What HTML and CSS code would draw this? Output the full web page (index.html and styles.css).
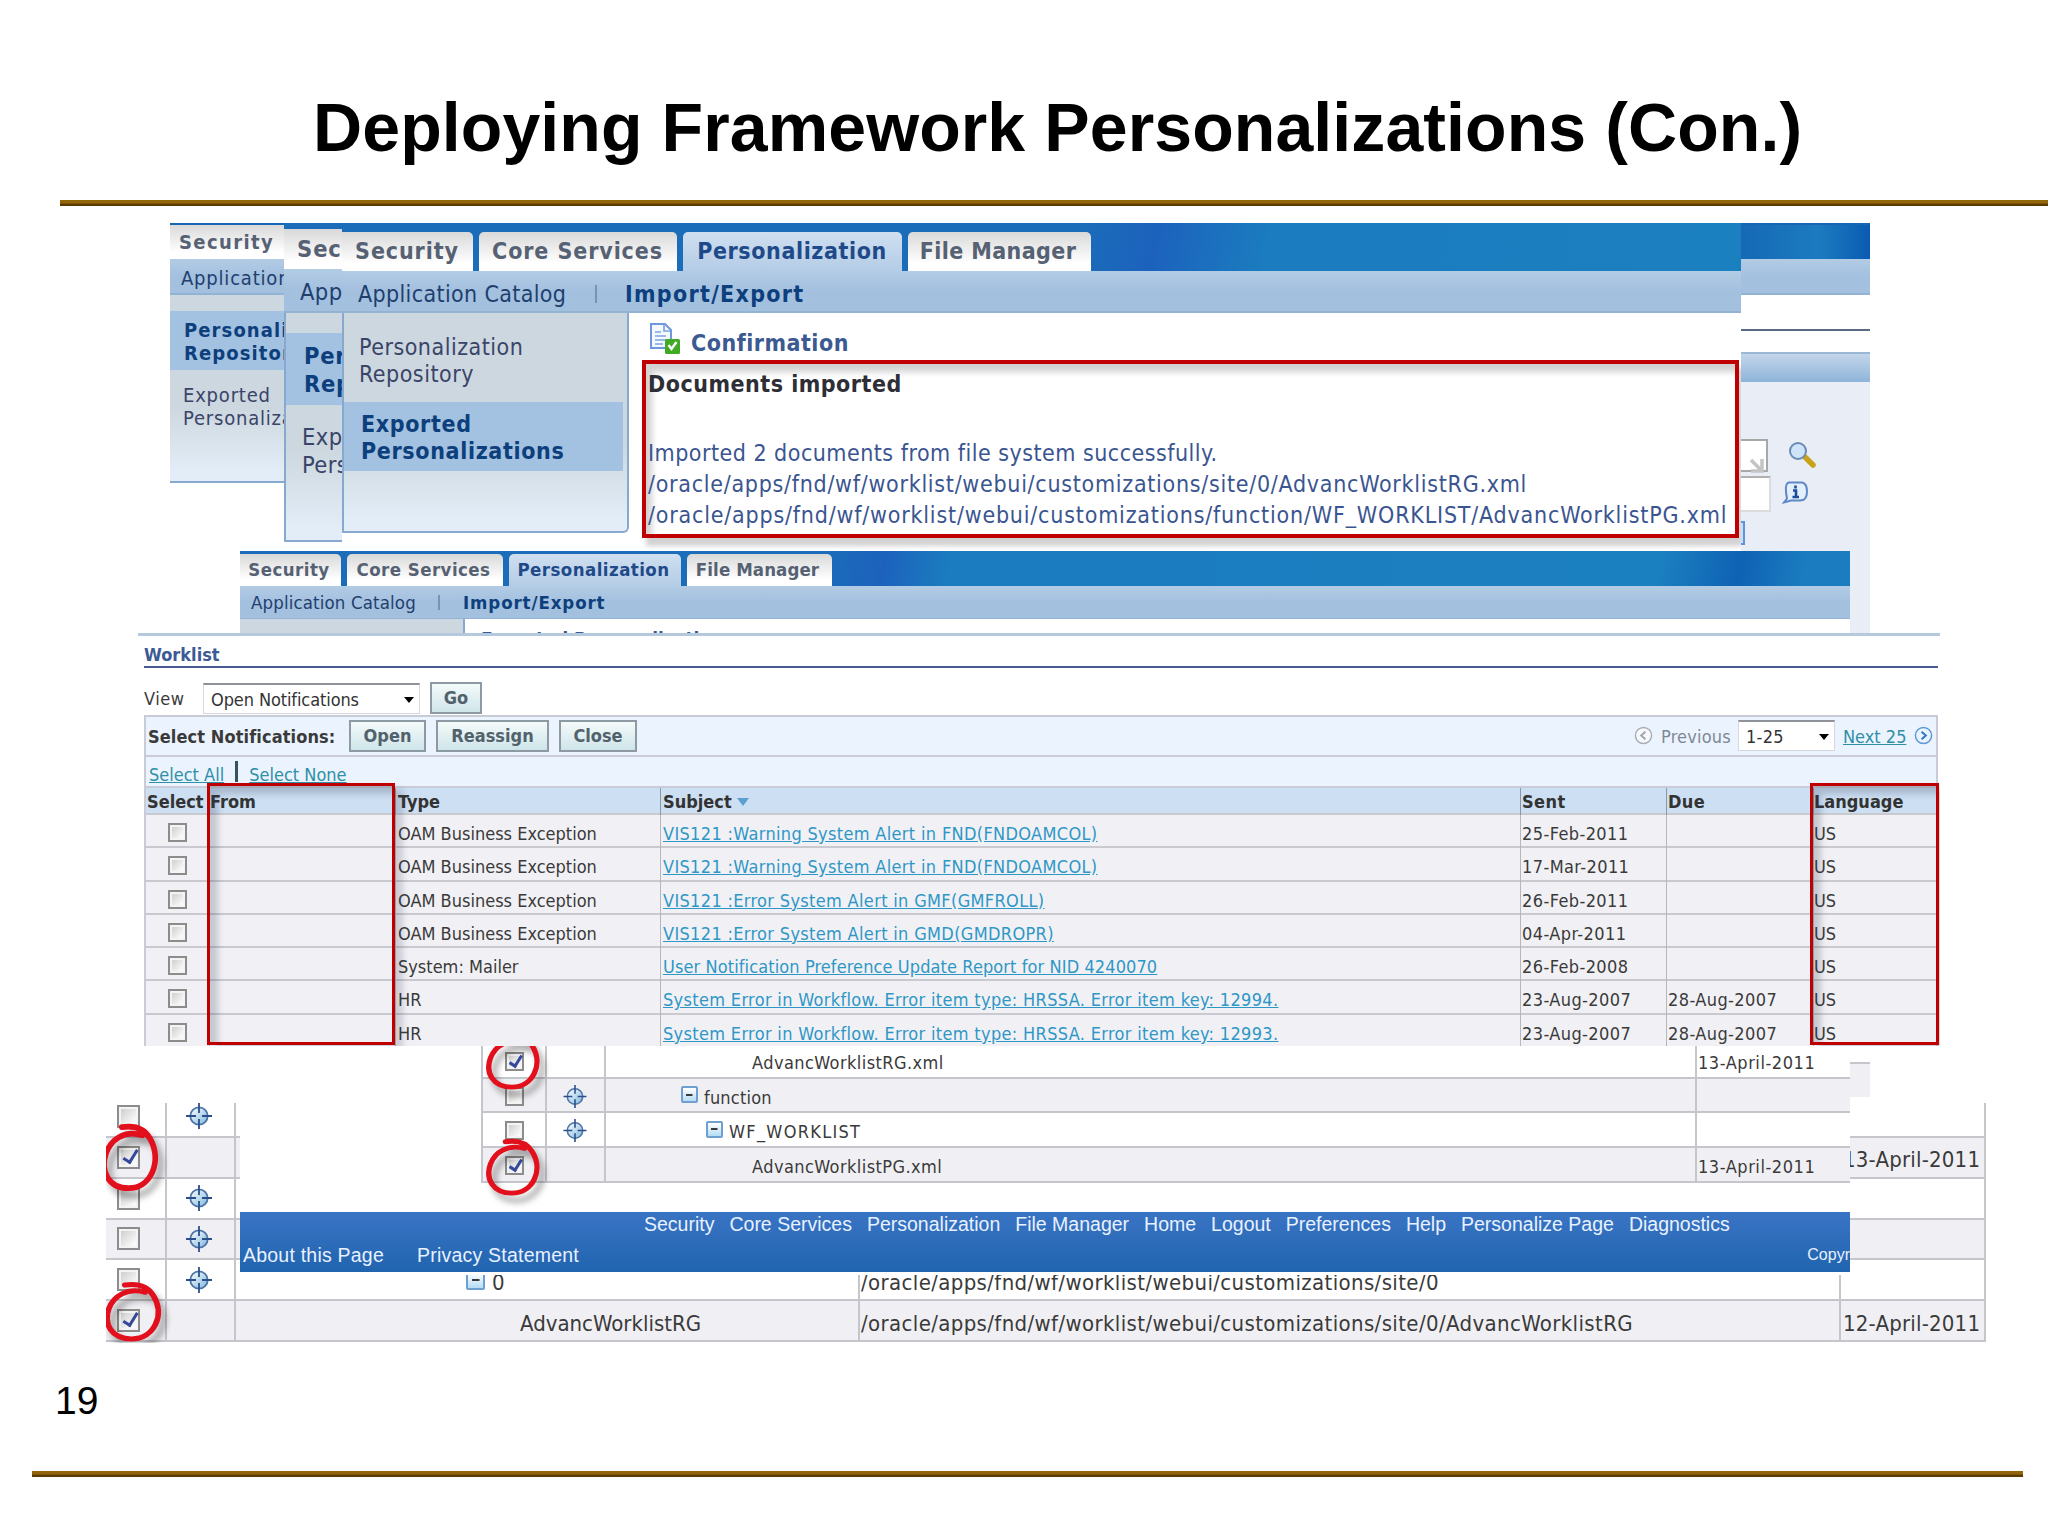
FILE: index.html
```
<!DOCTYPE html>
<html lang="en">

<head>
    <meta charset="UTF-8">
    <title>Deploying Framework Personalizations (Con.)</title>
    <link rel="stylesheet" href="styles.css">
</head>

<body>
    <svg width="0" height="0" class="defs">
        <defs>
            <linearGradient id="ballFill" x1="0" y1="0" x2="1" y2="1">
                <stop offset="0" stop-color="#ffffff" />
                <stop offset="1" stop-color="#7db8dc" />
            </linearGradient>
        </defs>
        <symbol id="target" viewBox="0 0 26 26">
            <circle cx="13" cy="13" r="8.7" fill="url(#ballFill)" stroke="#4f74a8" stroke-width="1.8" />
            <path d="M13 0v10M13 16v10M0 13h10M16 13h10" stroke="#2c4f8c" stroke-width="1.8" />
        </symbol>
        <symbol id="mark" viewBox="0 0 60 66" preserveAspectRatio="none">
            <path d="M21 8C33 6 41 9 46 18C57 37 47 61 27 61C9 61 2 46 7 31C11 19 23 10 39 15" fill="none" stroke="#e2101c" stroke-width="5" stroke-linecap="round" />
        </symbol>
    </svg>

    <div class="slide">
        <h1>Deploying Framework Personalizations (Con.)</h1>
        <div class="rule rule-top"></div>

        <!-- bottom table -->
        <div class="window big-table">
            <div class="row"><span class="c1"><i class="check"></i></span><span class="c2"><svg class="target"><use href="#target" /></svg></span><span class="c3"></span><span class="c4"></span><span class="c5"></span></div>
            <div class="row alt"><span class="c1"><i class="check on"></i></span><span class="c2"></span><span class="c3"></span><span class="c4"></span><span class="c5">13-April-2011</span></div>
            <div class="row"><span class="c1"><i class="check"></i></span><span class="c2"><svg class="target"><use href="#target" /></svg></span><span class="c3"></span><span class="c4"></span><span class="c5"></span></div>
            <div class="row alt"><span class="c1"><i class="check"></i></span><span class="c2"><svg class="target"><use href="#target" /></svg></span><span class="c3"></span><span class="c4"></span><span class="c5"></span></div>
            <div class="row"><span class="c1"><i class="check"></i></span><span class="c2"><svg class="target"><use href="#target" /></svg></span><span class="c3 level1"><i class="minus"></i>0</span><span class="c4">/oracle/apps/fnd/wf/worklist/webui/customizations/site/0</span><span class="c5"></span></div>
            <div class="row alt"><span class="c1"><i class="check on"></i></span><span class="c2"></span><span class="c3 level2">AdvancWorklistRG</span><span class="c4">/oracle/apps/fnd/wf/worklist/webui/customizations/site/0/AdvancWorklistRG</span><span class="c5">12-April-2011</span></div>
            <svg class="mark mark-a"><use href="#mark" /></svg>
            <svg class="mark mark-b"><use href="#mark" /></svg>
        </div>

        <!-- first window -->
        <div class="window win1">
            <div class="tabs"><span class="tab">Security</span></div>
            <div class="subnav"><span class="catalog">Application Catalog</span></div>
            <div class="cols">
                <div class="side">
                    <div class="item active">Personalization<br>Repository</div>
                    <div class="item">Exported<br>Personalizations</div>
                </div>
                <div class="search">
                    <div class="search-title"></div>
                    <div class="search-bar"></div>
                    <div class="search-panel">
                        <div class="field">
                            <div class="box resize"><svg width="16" height="16" viewBox="0 0 16 16"><path d="M2 2L12 12M13 1V13H2" fill="none" stroke="#c4c4c4" stroke-width="3.5" /></svg></div>
                            <svg class="lens" viewBox="0 0 28 26"><path d="M16 14L25 23" stroke="#c9a21a" stroke-width="5.5" stroke-linecap="round" /><ellipse cx="10" cy="9" rx="8" ry="8" fill="#cfe4fb" stroke="#6a8bb8" stroke-width="2" /></svg>
                        </div>
                        <div class="field second">
                            <div class="box"></div>
                            <svg class="tip" viewBox="0 0 28 24"><path d="M7 2H20Q25 3 25 11Q25 20 18 20H9L2 22L5 18Q2 3 7 2Z" fill="#e4effd" stroke="#5f88c8" stroke-width="2" /><path d="M13.500 5V8M11 10H14V16M10.500 16.500H17" fill="none" stroke="#1c4c9c" stroke-width="2.600" /></svg>
                        </div>
                        <div class="sliver"></div>
                    </div>
                </div>
            </div>
            <div class="stub"></div>
        </div>

        <!-- second window -->
        <div class="window win2">
            <div class="tabs"><span class="tab">Security</span></div>
            <div class="subnav"><span class="catalog">Application Catalog</span></div>
            <div class="side">
                <div class="item active">Personalization<br>Repository</div>
                <div class="item">Exported<br>Personalizations</div>
            </div>
        </div>

        <!-- import confirmation -->
        <div class="window win3">
            <div class="tabs">
                <span class="tab t1">Security</span>
                <span class="tab t2">Core Services</span>
                <span class="tab t3 current">Personalization</span>
                <span class="tab t4">File Manager</span>
            </div>
            <div class="subnav"><span class="catalog">Application Catalog</span><i class="sep"></i><b>Import/Export</b></div>
            <div class="cols">
                <div class="side">
                    <div class="item">Personalization<br>Repository</div>
                    <div class="item active">Exported<br>Personalizations</div>
                </div>
                <div class="content">
                    <div class="confirm">
                        <svg width="32" height="32" viewBox="0 0 32 32">
                            <path d="M2 1H16L22 7V25H2Z" fill="#f4f8ff" stroke="#6f97dc" stroke-width="2" />
                            <path d="M15 1V8H22M6 9H12M6 13H17M6 17H17M6 21H14" fill="none" stroke="#7fa3e0" stroke-width="1.700" />
                            <rect x="16" y="16" width="15" height="15" rx="1.500" fill="#3faa22" />
                            <path d="M19.500 22L22.500 26L27.500 19" fill="none" stroke="#fff" stroke-width="2.500" />
                        </svg>
                        <span>Confirmation</span>
                    </div>
                    <div class="docs">
                        <b>Documents imported</b>
                        <p class="msg">Imported 2 documents from file system successfully.</p>
                        <p class="path1">/oracle/apps/fnd/wf/worklist/webui/customizations/site/0/AdvancWorklistRG.xml</p>
                        <p class="path2">/oracle/apps/fnd/wf/worklist/webui/customizations/function/WF_WORKLIST/AdvancWorklistPG.xml</p>
                    </div>
                </div>
            </div>
        </div>

        <!-- exported personalizations -->
        <div class="window win4">
            <div class="tabs">
                <span class="tab t1">Security</span>
                <span class="tab t2">Core Services</span>
                <span class="tab t3 current">Personalization</span>
                <span class="tab t4">File Manager</span>
            </div>
            <div class="subnav"><span class="catalog">Application Catalog</span><i class="sep"></i><b>Import/Export</b></div>
            <div class="cols">
                <div class="side"></div>
                <div class="content">Exported Personalizations</div>
            </div>
            <div class="files">
                <div class="row"><span class="c1"><i class="check on"></i></span><span class="c2"></span><span class="c3 level3">AdvancWorklistRG.xml</span><span class="c4">13-April-2011</span></div>
                <div class="row alt"><span class="c1"><i class="check"></i></span><span class="c2"><svg class="target"><use href="#target" /></svg></span><span class="c3 level1"><i class="minus"></i>function</span><span class="c4"></span></div>
                <div class="row"><span class="c1"><i class="check"></i></span><span class="c2"><svg class="target"><use href="#target" /></svg></span><span class="c3 level2"><i class="minus"></i>WF_WORKLIST</span><span class="c4"></span></div>
                <div class="row alt"><span class="c1"><i class="check on"></i></span><span class="c2"></span><span class="c3 level3">AdvancWorklistPG.xml</span><span class="c4">13-April-2011</span></div>
                <svg class="mark mark-a"><use href="#mark" /></svg>
                <svg class="mark mark-b"><use href="#mark" /></svg>
            </div>
            <div class="footer">
                <div class="links"><span>Security</span><span>Core Services</span><span>Personalization</span><span>File Manager</span><span>Home</span><span>Logout</span><span>Preferences</span><span>Help</span><span>Personalize Page</span><span>Diagnostics</span></div>
                <div class="legal"><span>About this Page</span><span>Privacy Statement</span><small>Copyr</small></div>
            </div>
        </div>

        <!-- worklist -->
        <div class="window worklist">
            <h2>Worklist</h2>
            <div class="view">
                <label>View</label>
                <div class="select view-select">Open Notifications</div>
                <span class="btn go">Go</span>
            </div>
            <div class="table">
                <div class="actions">
                    <b>Select Notifications:</b>
                    <span class="btn open">Open</span>
                    <span class="btn reassign">Reassign</span>
                    <span class="btn close">Close</span>
                    <div class="pager">
                        <svg class="nav" viewBox="0 0 20 20"><circle cx="10" cy="10" r="8.500" fill="#f6f8fb" stroke="#a9adb5" stroke-width="1.500" /><path d="M12 6L7.500 10L12 14" fill="none" stroke="#a0a4ac" stroke-width="2" /></svg>
                        <span class="prev">Previous</span>
                        <div class="select page-select">1-25</div>
                        <a>Next 25</a>
                        <svg class="nav" viewBox="0 0 20 20"><circle cx="10" cy="10" r="8.500" fill="#e8f3ff" stroke="#5d97d6" stroke-width="1.500" /><path d="M8 6L12.500 10L8 14" fill="none" stroke="#2f74c4" stroke-width="2" /></svg>
                    </div>
                </div>
                <div class="pick"><a>Select All</a><i></i><a>Select None</a></div>
                <div class="line head"><b>Select</b><b>From</b><b>Type</b><b>Subject <i class="sort"></i></b><b>Sent</b><b>Due</b><b>Language</b></div>
                <div class="line"><span><i class="check"></i></span><span></span><span>OAM Business Exception</span><span><a>VIS121 :Warning System Alert in FND(FNDOAMCOL)</a></span><span>25-Feb-2011</span><span></span><span>US</span></div>
                <div class="line"><span><i class="check"></i></span><span></span><span>OAM Business Exception</span><span><a>VIS121 :Warning System Alert in FND(FNDOAMCOL)</a></span><span>17-Mar-2011</span><span></span><span>US</span></div>
                <div class="line"><span><i class="check"></i></span><span></span><span>OAM Business Exception</span><span><a>VIS121 :Error System Alert in GMF(GMFROLL)</a></span><span>26-Feb-2011</span><span></span><span>US</span></div>
                <div class="line"><span><i class="check"></i></span><span></span><span>OAM Business Exception</span><span><a>VIS121 :Error System Alert in GMD(GMDROPR)</a></span><span>04-Apr-2011</span><span></span><span>US</span></div>
                <div class="line"><span><i class="check"></i></span><span></span><span>System: Mailer</span><span><a class="tight">User Notification Preference Update Report for NID 4240070</a></span><span>26-Feb-2008</span><span></span><span>US</span></div>
                <div class="line"><span><i class="check"></i></span><span></span><span>HR</span><span><a>System Error in Workflow. Error item type: HRSSA. Error item key: 12994.</a></span><span>23-Aug-2007</span><span>28-Aug-2007</span><span>US</span></div>
                <div class="line"><span><i class="check"></i></span><span></span><span>HR</span><span><a>System Error in Workflow. Error item type: HRSSA. Error item key: 12993.</a></span><span>23-Aug-2007</span><span>28-Aug-2007</span><span>US</span></div>
            </div>
            <div class="frame frame-from"></div>
            <div class="frame frame-lang"></div>
        </div>

        <div class="page-no">19</div>
        <div class="rule rule-bottom"></div>
    </div>
</body>

</html>
```
FILE: styles.css
```
* {
    box-sizing: border-box;
}

body {
    margin: 0;
    background: #fff;
    font-family: "DejaVu Sans Condensed", "DejaVu Sans", sans-serif;
    font-stretch: condensed;
    color: #3a3a3a;
}

.defs {
    position: absolute;
}

.slide {
    position: relative;
    width: 2048px;
    height: 1536px;
    overflow: hidden;
}

h1 {
    margin: 0;
    padding: 88px 0 0 313px;
    font: bold 68px/78px "Liberation Sans", Arial, sans-serif;
    letter-spacing: .1px;
    color: #000;
    white-space: nowrap;
}

.rule {
    height: 6px;
    background: linear-gradient(#936709 0 50%, #5c3b02 70%);
}

.rule-top {
    margin: 34px 0 0 60px;
}

.rule-bottom {
    position: absolute;
    left: 32px;
    top: 1471px;
    width: 1991px;
}

.page-no {
    position: absolute;
    left: 55px;
    top: 1378px;
    font: 39px/46px "Liberation Sans", Arial, sans-serif;
    color: #000;
}

/* windows lie over each other on the slide */
.window {
    position: absolute;
    overflow: hidden;
    background: #fff;
    white-space: nowrap;
}

.tabs {
    display: flex;
    align-items: flex-end;
    background: linear-gradient(100deg, #1b6db9 0 52%, #1c62bd 58%, #1b7cbf 66%, #1b80c0 100%);
}

.tab {
    background: linear-gradient(#d9d9d9, #fff 80%);
    color: #566173;
    font-weight: bold;
    border-radius: 5px 5px 0 0;
    text-align: center;
}

.tab.current {
    background: linear-gradient(#cfdff0, #b4cce6);
    color: #1f4a8a;
}

.subnav {
    display: flex;
    align-items: center;
    background: linear-gradient(#b3cce5, #a3c0df 50%);
    border-bottom: 2px solid #93b3d4;
    color: #1f3f6e;
}

.subnav b {
    color: #0c3f7c;
}

.sep {
    width: 2px;
    height: 18px;
    background: #7893b4;
}

.side {
    background: linear-gradient(#ccd7df 60%, #e2edf7 95%);
    color: #3a4468;
}

.item.active {
    background: #a3c1e0;
    color: #0c3f7c;
    font-weight: bold;
}

.cols {
    display: flex;
}

.check {
    display: block;
    width: 19px;
    height: 19px;
    border: 2px solid #8c8c8c;
    background: linear-gradient(135deg, #c8c8c8, #fafafa 80%);
    box-shadow: inset 0 0 0 2px #f4f4f4;
}

.check.on::after {
    content: "";
    display: block;
    width: 30%;
    height: 70%;
    margin: -5% 0 0 38%;
    border: solid #34499c;
    border-width: 0 3px 3px 0;
    transform: rotate(32deg);
}

.minus {
    display: inline-block;
    background: linear-gradient(#3a3a3a, #3a3a3a) center / 50% 2px no-repeat, linear-gradient(#fff, #b5dcf5);
    border: 2px solid #6f9fd0;
    border-radius: 2px;
}

.mark {
    position: absolute;
    filter: drop-shadow(5px 7px 3px rgba(0, 0, 0, .35));
}

.row {
    display: flex;
    border-bottom: 2px solid #c4c6cc;
}

.row span {
    display: flex;
    align-items: center;
    border-right: 2px solid #c4c6cc;
}

.row .c1,
.row .c2 {
    justify-content: center;
    padding: 0;
}

.row.alt {
    background: #f0f0f4;
}

/* first window */
.win1 {
    left: 170px;
    top: 223px;
    width: 1700px;
    height: 874px;
    font-size: 20px;
}

.win1 .tabs {
    height: 36px;
    background: linear-gradient(90deg, #1567b4 92%, #1c7bc0 97%, #0a5bb2 100%);
    border-top: 2px solid #1567b4;
}

.win1 .tab {
    width: 114px;
    height: 34px;
    line-height: 34px;
    padding-left: 9px;
    border-radius: 0;
    text-align: left;
    letter-spacing: 1.4px;
}

.win1 .subnav {
    height: 36px;
    padding: 3px 0 0 11px;
}

.win1 .catalog {
    width: 103px;
    overflow: hidden;
    letter-spacing: .8px;
}

.win1 .side {
    width: 114px;
    height: 188px;
    padding-top: 16px;
    overflow: hidden;
    border-bottom: 2px solid #87a9cf;
}

.win1 .item {
    height: 59px;
    padding: 8px 0 0 14px;
    line-height: 23px;
    letter-spacing: 1.1px;
    overflow: hidden;
}

.win1 .item + .item {
    height: 70px;
    padding: 14px 0 0 13px;
    letter-spacing: .8px;
}

.search {
    flex: 1;
    padding-left: 1457px;
}

.search-title {
    height: 36px;
    border-bottom: 2px solid #596b80;
}

.search-bar {
    height: 30px;
    margin-top: 21px;
    background: linear-gradient(#c3d6ea, #8eb4da);
    border-top: 2px solid #9bb7d4;
}

.search-panel {
    height: 260px;
    padding-top: 57px;
    background: #e9edf6;
}

.field {
    display: flex;
    height: 33px;
    gap: 20px;
}

.field.second {
    height: 36px;
    margin-top: 4px;
    gap: 11px;
}

.box {
    width: 27px;
    background: #fff;
    border: 2px solid #a8a8a8;
    border-left: 0;
}

.box.resize {
    padding: 14px 0 0 8px;
}

.second .box {
    width: 30px;
    border-color: #b0b0b0 #dcdcdc #dcdcdc;
}

.lens {
    width: 28px;
    height: 26px;
    margin-top: 3px;
}

.tip {
    width: 28px;
    height: 25px;
    margin-top: 4px;
}

.sliver {
    width: 4px;
    height: 24px;
    margin-top: 9px;
    background: #c9defa;
    border: 2px solid #5f93dd;
    border-left: 0;
}

.stub {
    height: 35px;
    margin: 420px 0 0 1600px;
    background: #f0f0f4;
    border-top: 2px solid #c4c6cc;
}

/* second window */
.win2 {
    left: 284px;
    top: 223px;
    width: 1400px;
    height: 328px;
    font-size: 23.5px;
}

.win2 .tabs {
    height: 46px;
}

.win2 .tab {
    width: 58px;
    height: 40px;
    line-height: 41px;
    padding-left: 13px;
    border-radius: 0;
    text-align: left;
    overflow: hidden;
    letter-spacing: .9px;
}

.win2 .subnav {
    height: 44px;
    padding: 4px 0 0 16px;
}

.win2 .catalog {
    width: 42px;
    overflow: hidden;
    letter-spacing: .4px;
}

.win2 .side {
    width: 58px;
    height: 229px;
    padding-top: 20px;
    border: solid #87a9cf;
    border-width: 0 0 2px 2px;
}

.win2 .item {
    height: 72px;
    padding: 9px 0 0 18px;
    line-height: 28px;
    overflow: hidden;
    letter-spacing: .7px;
}

.win2 .item + .item {
    height: 90px;
    padding: 18px 0 0 16px;
    letter-spacing: .4px;
}

/* import confirmation */
.win3 {
    left: 342px;
    top: 223px;
    width: 1399px;
    height: 328px;
    font-size: 23px;
}

.win3 .tabs {
    height: 48px;
    gap: 6px;
}

.win3 .tab {
    height: 39px;
    padding-right: 1px;
    line-height: 39px;
    letter-spacing: .9px;
}

.win3 .t1 { width: 131px; border-top-left-radius: 0; }
.win3 .t2 { width: 198px; }
.win3 .tab.t3 { width: 219px; letter-spacing: .6px; }
.win3 .tab.t4 { width: 183px; padding-right: 3px; letter-spacing: .4px; }

.win3 .subnav {
    height: 42px;
    padding: 5px 0 0 16px;
}

.win3 .catalog {
    width: 237px;
    letter-spacing: .35px;
}

.win3 .subnav b {
    letter-spacing: 1.3px;
}

.win3 .sep {
    margin-right: 28px;
}

.win3 .side {
    width: 287px;
    height: 220px;
    padding: 19px 4px 0 0;
    border: 2px solid #87a9cf;
    border-top: 0;
    border-radius: 0 0 6px 0;
    line-height: 27px;
}

.win3 .item {
    height: 69px;
    padding: 2px 0 0 15px;
    letter-spacing: .5px;
}

.win3 .item + .item {
    padding: 9px 0 0 17px;
    margin-top: 1px;
    letter-spacing: .65px;
}

.win3 .content {
    padding: 10px 0 0 13px;
}

.confirm {
    display: flex;
    height: 37px;
    padding-left: 7px;
    gap: 10px;
    color: #3b5a92;
    font-weight: bold;
    line-height: 41px;
    letter-spacing: .5px;
}

.docs {
    width: 1097px;
    height: 178px;
    padding: 6px 0 0 2px;
    border: 4px solid #c00000;
    box-shadow: inset 6px 8px 6px rgba(0, 0, 0, .18), 4px 8px 5px rgba(0, 0, 0, .18);
    color: #3a5590;
    line-height: 31px;
}

.docs b {
    display: block;
    height: 68px;
    color: #2e2e36;
    line-height: 28px;
    letter-spacing: .5px;
}

.docs p {
    margin: 0;
}

.msg { letter-spacing: .48px; }
.path1 { letter-spacing: .72px; }
.path2 { letter-spacing: .8px; }

/* exported personalizations */
.win4 {
    left: 240px;
    top: 551px;
    width: 1610px;
    height: 724px;
    font-size: 18.5px;
}

.win4 .tabs {
    height: 35px;
    gap: 6px;
    background: linear-gradient(100deg, #1b6db9 0 36%, #1c62bd 40%, #1b7cbf 44%, #1b80c0 88%, #0f62b4 93%, #1b7cbf 97%);
}

.win4 .tab {
    height: 32px;
    padding-right: 3px;
    line-height: 32px;
    letter-spacing: .45px;
}

.win4 .t1 { width: 101px; border-top-left-radius: 0; }
.win4 .t2 { width: 156px; }
.win4 .t3 { width: 172px; }
.win4 .tab.t4 { width: 145px; padding-right: 4px; letter-spacing: .1px; }

.win4 .subnav {
    height: 33px;
    padding: 1px 0 0 11px;
    border-bottom-width: 1px;
}

.win4 .catalog {
    width: 187px;
    letter-spacing: .14px;
}

.win4 .subnav b {
    letter-spacing: .9px;
}

.win4 .sep {
    height: 15px;
    margin-right: 23px;
}

.win4 .cols {
    height: 425px;
}

.win4 .side {
    width: 225px;
    background: #ccd7df;
    border-right: 2px solid #87a9cf;
}

.win4 .content {
    padding: 9px 0 0 16px;
    font-size: 19px;
    font-weight: bold;
    color: #3b5a92;
}

.files {
    position: relative;
    margin-left: 241px;
    font-size: 18px;
}

.files .row {
    height: 34.7px;
}

.files .row span {
    padding-top: 4px;
}

.files .row .c1 { width: 66px; padding: 2px 0 0; border-left: 2px solid #c4c6cc; }
.files .row .c2 { width: 59px; padding: 2px 2px 0 0; }
.files .c3 { width: 1091px; letter-spacing: .42px; }
.files .row .c4 { padding-left: 1px; border-right: 0; letter-spacing: .55px; }
.files .level1 { padding-left: 75px; letter-spacing: .2px; }
.files .level2 { padding-left: 100px; letter-spacing: 1.3px; }
.files .level3 { padding-left: 146px; }

.files .minus {
    width: 17px;
    height: 17px;
    margin: -5px 6px 0 0;
}

.files .target {
    width: 24px;
    height: 23px;
}

.files .mark {
    left: 2px;
    width: 64px;
    height: 64px;
}

.files .mark-a { top: -16px; clip-path: inset(18px -20px -20px -20px); }
.files .mark-b { top: 90px; }

.footer {
    height: 60px;
    margin-top: 29px;
    background: linear-gradient(#3a74c4, #2064af);
    color: #e8f1ff;
    font: 19.5px/24px "Liberation Sans", Arial, sans-serif;
}

.links {
    display: flex;
    gap: 15px;
    height: 31px;
    padding: 0 0 0 404px;
}

.legal {
    display: flex;
    padding-left: 3px;
}

.legal span {
    margin-right: 33px;
    letter-spacing: .22px;
}

.legal small {
    margin-left: auto;
    font-size: 16px;
}

/* worklist */
.worklist {
    left: 138px;
    top: 633px;
    width: 1802px;
    height: 413px;
    padding-left: 6px;
    border-top: 3px solid #b5c9de;
    font-size: 18px;
}

h2 {
    margin: 0 2px 0 0;
    height: 32px;
    padding-top: 3px;
    border-bottom: 2px solid #465c90;
    color: #3c5a94;
    font-size: 18px;
    line-height: 32px;
}

.view {
    display: flex;
    height: 47px;
    padding-top: 14px;
    line-height: 34px;
}

.view label {
    width: 59px;
    letter-spacing: .5px;
}

.select {
    position: relative;
    height: 31px;
    padding-left: 7px;
    background: #fff;
    border: 1px solid #d4d8de;
    border-top: 2px solid #8f9399;
    line-height: 30px;
    color: #333;
    letter-spacing: -.1px;
}

.select::after {
    content: "";
    position: absolute;
    right: 5px;
    top: 12px;
    border: solid transparent;
    border-width: 6px 5.5px 0;
    border-top-color: #000;
}

.view-select {
    width: 217px;
    margin: 1px 10px 0 0;
}

.btn {
    height: 32px;
    background: linear-gradient(#f4fafa, #cfe5ea);
    border: 2px solid #8d9aa3;
    color: #52626c;
    font-weight: bold;
    line-height: 27px;
    text-align: center;
}

.go { width: 52px; }
.open { width: 77px; margin-right: 10px; }
.reassign { width: 113px; margin-right: 10px; }
.close { width: 78px; }

.table {
    width: 1794px;
    border: 2px solid #c9ccd6;
    border-bottom: 0;
}

.actions {
    display: flex;
    height: 40px;
    padding: 3px 3px 0 2px;
    background: #ebf4fe;
    border-bottom: 2px solid #c9ccd6;
    line-height: 34px;
}

.actions > b {
    width: 201px;
    letter-spacing: .1px;
}

.pager {
    display: flex;
    margin-left: auto;
    color: #7f8894;
}

.nav {
    width: 19px;
    height: 19px;
    margin-top: 6px;
}

.prev {
    width: 77px;
    margin-left: 8px;
    letter-spacing: .2px;
}

.page-select {
    width: 97px;
    margin-right: 8px;
    letter-spacing: .3px;
}

.pager a {
    width: 71px;
}

a {
    color: #2f8fa6;
    text-decoration: underline;
}

.pick {
    display: flex;
    height: 29px;
    padding-left: 3px;
    background: #ebf4fe;
    line-height: 35px;
}

.pick a {
    height: 29px;
}

.pick i {
    width: 3px;
    height: 21px;
    margin: 4px 11px 0;
    background: #32555e;
}

.line {
    display: grid;
    grid-template-columns: 63px 186px 265px 860px 146px 147px 1fr;
    height: 33.3px;
    background: #f1f1f5;
    border-bottom: 2px solid #c9cacf;
}

.line > * {
    padding: 4px 0 0 2px;
    line-height: 30px;
    border-left: 1px solid #b5b7be;
}

.line > :nth-child(2),
.line > :last-child {
    padding-left: 0;
}

.line > :nth-child(5),
.line > :nth-child(6) {
    padding-left: 1px;
    letter-spacing: .4px;
}

.line > :first-child {
    padding-left: 22px;
    border-left: 0;
}

.line a {
    color: #2e97c6;
    letter-spacing: .33px;
}

.line a.tight {
    letter-spacing: .1px;
}

.line .check {
    margin-top: 4px;
}

.line.head {
    height: 29px;
    background: #cddff2;
    border-top: 2px solid #c9ccd6;
    color: #333;
}

.head > * {
    padding-top: 0;
    line-height: 28px;
    border-color: #8b97a4;
}

.line.head > :first-child {
    padding-left: 1px;
}

.sort {
    display: inline-block;
    border: solid transparent;
    border-width: 8px 6px 0;
    border-top-color: #5b9fce;
    vertical-align: 2px;
}

.frame {
    position: absolute;
    top: 147px;
    height: 262px;
    border: 3px solid #c00000;
    box-shadow: inset 8px 8px 6px rgba(40, 50, 80, .22), 8px 6px 6px rgba(40, 50, 80, .18);
}

.frame-from { left: 69px; width: 188px; }
.frame-lang { left: 1672px; width: 129px; }

/* bottom table */
.big-table {
    left: 106px;
    top: 1103px;
    width: 1880px;
    height: 240px;
    font-size: 22px;
}

.big-table .row {
    height: 40.8px;
    width: 1880px;
}

.big-table .row:first-child {
    margin-top: -7px;
    height: 42px;
}

.big-table .row span {
    padding-top: 5px;
}

.big-table .row .c1 { width: 61px; padding: 0 14px 0 0; }
.big-table .row .c2 { width: 69px; padding: 0 3px 0 0; }
.big-table .c3 { width: 624px; }
.big-table .c4 { width: 981px; padding-left: 1px; letter-spacing: .37px; }
.big-table .c5 { flex: 1; padding-left: 2px; letter-spacing: .2px; }
.big-table .level1 { padding-left: 230px; }
.big-table .level2 { padding-left: 284px; }

.big-table .check {
    width: 23px;
    height: 23px;
}

.big-table .target {
    width: 26px;
    height: 26px;
}

.big-table .minus {
    width: 19px;
    height: 19px;
    margin: -4px 7px 0 0;
}

.big-table .mark-a { left: -8px; top: 15px; width: 68px; height: 76px; }
.big-table .mark-b { left: -5px; top: 174px; width: 68px; height: 67px; }
```
